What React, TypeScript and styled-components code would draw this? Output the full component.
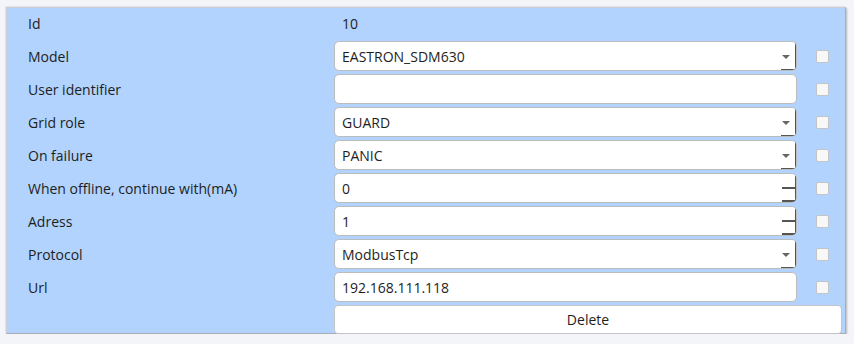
import React from "react";
import styled, { createGlobalStyle } from "styled-components";

const GlobalStyle = createGlobalStyle`
  html, body {
    margin: 0;
    padding: 0;
    background: #f4f5f8;
    font-family: "Open Sans", "Noto Sans", sans-serif;
    font-size: 14px;
    color: #1e1e1e;
  }
`;

const Page = styled.div`
  padding: 7px 8px 0 6px;
`;

const Panel = styled.div`
  width: 840px;
  height: 327px;
  box-sizing: border-box;
  background: #b1d3fd;
  border: 1px solid #c9ced8;
  border-right-color: #a9acb2;
  border-bottom-color: #a9acb2;
  box-shadow: 1px 1px 2px rgba(0, 0, 0, 0.25), -1px -1px 1px rgba(0, 0, 0, 0.05);
  padding: 0 2px 0 21px;
  display: grid;
  grid-template-columns: 306px 463px 32px 1fr;
  grid-auto-rows: 30px;
  row-gap: 3px;
  align-items: center;
`;

const Label = styled.div`
  padding-top: 2px;
  line-height: 28px;
`;

const Value = styled(Label)`
  padding-left: 8px;
`;

const Field = styled.div`
  position: relative;
  height: 30px;
  box-sizing: border-box;
  background: #fff;
  border: 1px solid #bcbcbc;
  border-radius: 5px;
  padding: 1px 0 0 7px;
  line-height: 28px;
  white-space: nowrap;
  overflow: hidden;
`;

const SelectEdge = styled.span`
  position: absolute;
  right: -1px;
  top: 0;
  bottom: -1px;
  width: 14px;
  border-right: 2px solid #555;
  border-bottom: 2px solid #555;
`;

const Arrow = styled.span`
  position: absolute;
  right: 6px;
  top: 13px;
  width: 0;
  height: 0;
  border-left: 4px solid transparent;
  border-right: 4px solid transparent;
  border-top: 4px solid #666;
`;

const Spin = styled.span`
  position: absolute;
  right: -1px;
  top: 2px;
  bottom: -1px;
  width: 13px;
  border-right: 2px solid #555;
`;

const SpinLine = styled.span<{ $top: number }>`
  position: absolute;
  right: 0;
  top: ${(p) => p.$top}px;
  width: 13px;
  border-top: 2px solid #555;
`;

const Check = styled.div`
  justify-self: start;
  margin-left: 19px;
  width: 13px;
  height: 13px;
  box-sizing: border-box;
  background: #f8f8f8;
  border: 1px solid #c4c4c4;
  border-radius: 2px;
`;

const Empty = styled.div``;

const DeleteButton = styled.button`
  grid-column: 2 / 5;
  align-self: start;
  height: 29px;
  margin-right: 1px;
  background: #fff;
  border: 1px solid #c4c4c4;
  border-radius: 4px;
  font-family: inherit;
  font-size: 14px;
  color: #1e1e1e;
  padding: 0;
`;

type Kind = "select" | "text" | "number";

const rows: { label: string; value: string; kind: Kind }[] = [
  { label: "Model", value: "EASTRON_SDM630", kind: "select" },
  { label: "User identifier", value: "", kind: "text" },
  { label: "Grid role", value: "GUARD", kind: "select" },
  { label: "On failure", value: "PANIC", kind: "select" },
  { label: "When offline, continue with(mA)", value: "0", kind: "number" },
  { label: "Adress", value: "1", kind: "number" },
  { label: "Protocol", value: "ModbusTcp", kind: "select" },
  { label: "Url", value: "192.168.111.118", kind: "text" },
];

export default function App() {
  return (
    <>
      <GlobalStyle />
      <Page>
        <Panel>
          <Label>Id</Label>
          <Value>10</Value>
          <Empty />
          <Empty />
          {rows.map((r) => (
            <React.Fragment key={r.label}>
              <Label>{r.label}</Label>
              <Field>
                {r.value}
                {r.kind === "select" && (
                  <>
                    <SelectEdge />
                    <Arrow />
                  </>
                )}
                {r.kind === "number" && (
                  <Spin>
                    <SpinLine $top={11} />
                    <SpinLine $top={24} />
                  </Spin>
                )}
              </Field>
              <Check />
              <Empty />
            </React.Fragment>
          ))}
          <Empty />
          <DeleteButton>Delete</DeleteButton>
        </Panel>
      </Page>
    </>
  );
}
